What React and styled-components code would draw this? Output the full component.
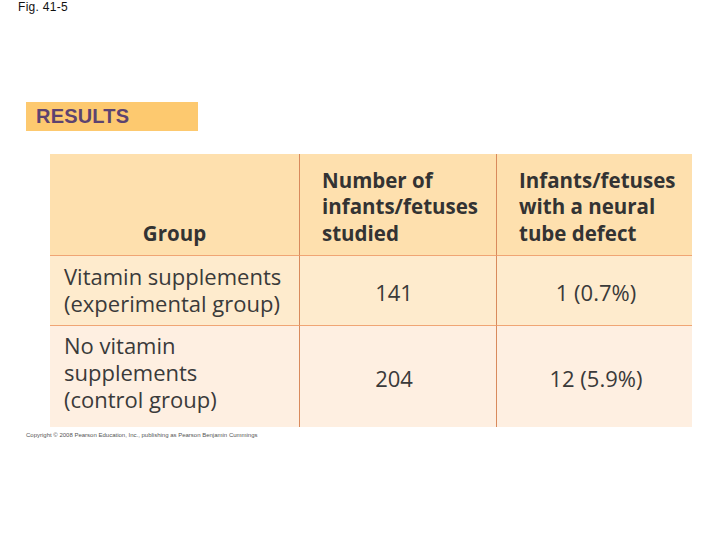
import React from "react";
import styled, { createGlobalStyle } from "styled-components";

const Global = createGlobalStyle`
  html, body { margin: 0; padding: 0; background: #ffffff; }
  body { width: 720px; height: 540px; overflow: hidden; }
`;

const Page = styled.div`
  position: relative;
  width: 720px;
  height: 540px;
  background: #ffffff;
  display: flex;
  flex-direction: column;
`;

const FigLabel = styled.div`
  font-family: "Liberation Sans", Arial, sans-serif;
  font-size: 12px;
  color: #111;
  padding: 1px 0 0 18px;
  height: 15px;
  line-height: 13px;
  letter-spacing: 0.3px;
`;

const ResultsBar = styled.div`
  margin: 86px 0 0 26px;
  width: 172px;
  height: 29px;
  background: #fdc96f;
  display: flex;
  align-items: center;
  padding-left: 10px;
  box-sizing: border-box;
  font-family: "Liberation Sans", Arial, sans-serif;
  font-weight: 700;
  font-size: 20px;
  color: #5d4370;
  letter-spacing: 0.2px;
`;

const Table = styled.div`
  margin: 23px 0 0 50px;
  width: 642px;
  display: grid;
  grid-template-columns: 250px 197px 195px;
  grid-template-rows: 102px 70px 101px;
  font-family: "Open Sans", "Noto Sans", sans-serif;
  color: #3a3a3a;
`;

const bgFor = { head: "#fee0ae", r1: "#feebcd", r2: "#feefe1" };

const padFor = (p) => {
  if (p.$row === "head") return p.$center ? "0 0 9px 0" : "0 6px 9px 22px";
  if (p.$num) return p.$last ? "3px 0 0 3px" : "3px 8px 0 0";
  return p.$row === "r2" ? "0 6px 8px 14px" : "0 6px 2px 14px";
};

const Cell = styled.div`
  background: ${(p) => bgFor[p.$row]};
  box-sizing: border-box;
  display: flex;
  flex-direction: column;
  justify-content: ${(p) => (p.$row === "head" ? "flex-end" : "center")};
  align-items: ${(p) => (p.$center || p.$num ? "center" : "flex-start")};
  text-align: ${(p) => (p.$center || p.$num ? "center" : "left")};
  padding: ${padFor};
  border-right: ${(p) => (p.$last ? "none" : "1.5px solid #d98a5c")};
  border-bottom: ${(p) => (p.$bottom ? "none" : "1.5px solid #f0a574")};
  font-size: ${(p) => (p.$row === "head" ? "20.5px" : "22px")};
  line-height: ${(p) => (p.$row === "head" ? "26.5px" : "26.8px")};
  font-weight: ${(p) => (p.$row === "head" ? 700 : 400)};
  color: ${(p) => (p.$row === "head" ? "#333333" : "#3a3a3a")};
  white-space: nowrap;
`;

const Line = styled.span`
  display: block;
`;

const Copyright = styled.div`
  margin: 5px 0 0 26px;
  font-family: "Liberation Sans", Arial, sans-serif;
  font-size: 6px;
  color: #555;
`;

export default function App() {
  return (
    <Page>
      <Global />
      <FigLabel>Fig. 41-5</FigLabel>
      <ResultsBar>RESULTS</ResultsBar>
      <Table>
        <Cell $row="head" $center>
          Group
        </Cell>
        <Cell $row="head">
          <Line>Number of</Line>
          <Line>infants/fetuses</Line>
          <Line>studied</Line>
        </Cell>
        <Cell $row="head" $last>
          <Line>Infants/fetuses</Line>
          <Line>with a neural</Line>
          <Line>tube defect</Line>
        </Cell>

        <Cell $row="r1">
          <Line>Vitamin supplements</Line>
          <Line>(experimental group)</Line>
        </Cell>
        <Cell $row="r1" $num>141</Cell>
        <Cell $row="r1" $num $last>1 (0.7%)</Cell>

        <Cell $row="r2" $bottom>
          <Line>No vitamin</Line>
          <Line>supplements</Line>
          <Line>(control group)</Line>
        </Cell>
        <Cell $row="r2" $num $bottom>204</Cell>
        <Cell $row="r2" $num $last $bottom>12 (5.9%)</Cell>
      </Table>
      <Copyright>
        Copyright © 2008 Pearson Education, Inc., publishing as Pearson Benjamin Cummings
      </Copyright>
    </Page>
  );
}
